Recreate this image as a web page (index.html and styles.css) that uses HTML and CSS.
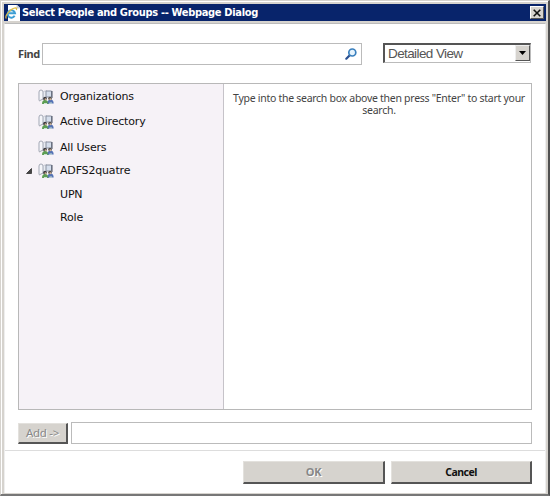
FILE: index.html
```html
<!DOCTYPE html>
<html lang="en">
<head>
<meta charset="utf-8">
<title>Select People and Groups -- Webpage Dialog</title>
<link rel="stylesheet" href="styles.css">
</head>
<body>
<svg width="0" height="0" class="defs" aria-hidden="true">
  <symbol id="directory" viewBox="0 0 16 16">
    <path d="M1 11.500V3q0-2 2-2t2 2v8" fill="#f5f6fa" stroke="#a3a8b5"/>
    <path d="M5.500 2.500l3-1v8l-3 1z" fill="#e8ebf2" stroke="#b8bcc8" stroke-width=".7"/>
    <path d="M8 2h5.500v6H8z" fill="#d5deec" stroke="#8a909f"/>
    <path d="M14 2v7" stroke="#4b5265" stroke-width="1"/>
    <path d="M1 12l4-2 2 2" fill="none" stroke="#a1a5b0"/>
    <path d="M4 15q0-4 3-4t4 4z" fill="#5d9e52"/>
    <path d="M9.500 14.500q0-4 3-4t3.200 4z" fill="#5573b5"/>
    <path d="M6 14.500h3M11.500 14h2.500" stroke="#c8e1d2"/>
    <circle cx="7" cy="9.500" r="1.800" fill="#39393d"/>
    <circle cx="7.500" cy="10.300" r="1" fill="#c8aa8a"/>
    <circle cx="12" cy="9.500" r="1.800" fill="#55504c"/>
    <circle cx="12.300" cy="10.300" r="1" fill="#d1b497"/>
  </symbol>
</svg>
<div class="window">
  <header class="titlebar">
    <svg class="ie" viewBox="0 0 16 16" width="16" height="16">
      <path d="M3 0h9l3 3v13H3z" fill="#fff"/>
      <path d="M12 0v3h3" fill="#d8dce5" stroke="#a9b0bf" stroke-width=".6"/>
      <path d="M9.600 10.800A3.700 3.700 0 1 1 10 8.300H3" fill="none" stroke="#3d9ed4" stroke-width="2"/>
      <path d="M1.400 13.500C-1 11 6 3.200 10.600 2.900c1.300 0 1.300 1 .6 2.100" fill="none" stroke="#e1bd42" stroke-width="1.200"/>
    </svg>
    <h1>Select People and Groups -- Webpage Dialog</h1>
    <button class="close" aria-label="Close"><svg viewBox="0 0 8 8" width="8" height="8"><path d="M.7.7l6.600 6.600M7.300.7L.7 7.300" stroke="#111" stroke-width="1.600"/></svg></button>
  </header>
  <main>
    <div class="search-row">
      <label>Find</label>
      <div class="search"><svg viewBox="0 0 12 12" width="12" height="12"><path d="M5 7L1.300 10.700" stroke="#294f91" stroke-width="2.200" stroke-linecap="round"/><circle cx="7.300" cy="4.500" r="3.500" fill="#e5f3fd" stroke="#397fbd" stroke-width="1.700"/></svg></div>
      <div class="select"><span>Detailed View</span><i><svg viewBox="0 0 7 4" width="7" height="4"><path d="M0 0h7L3.500 4z"/></svg></i></div>
    </div>
    <section class="picker">
      <ul class="tree">
        <li class="org"><b></b><svg><use href="#directory"/></svg><span>Organizations</span></li>
        <li class="active"><b></b><svg><use href="#directory"/></svg><span>Active Directory</span></li>
        <li class="users"><b></b><svg><use href="#directory"/></svg><span>All Users</span></li>
        <li class="adfs"><b><svg class="expander" viewBox="0 0 6 6"><path d="M5.500.5v5h-5z" fill="#444" stroke="#222" stroke-width=".7"/></svg></b><svg><use href="#directory"/></svg><span>ADFS2quatre</span></li>
        <li class="child upn"><span>UPN</span></li>
        <li class="child role"><span>Role</span></li>
      </ul>
      <p class="results">Type into the search box above then press "Enter" to start your<br>search.</p>
    </section>
    <div class="add-row"><button class="btn off">Add -&gt;</button><div class="field"></div></div>
    <footer><button class="btn off">OK</button><button class="btn cancel">Cancel</button></footer>
  </main>
</div>
</body>
</html>
```

FILE: styles.css
```css
* { box-sizing: border-box; }
body { margin: 0; background: #fff; color: #444; font: 11px/13px "Noto Sans", sans-serif; }
.defs { display: block; height: 0; }
.window { width: 550px; height: 496px; padding: 3px 2px 0 3px; background: #d6d3ce; border: solid; border-width: 1px 2px 2px 1px; border-color: #d6d3ce #505050 #777 #d6d3ce; box-shadow: inset 1px 1px #fff; }
.titlebar { display: flex; align-items: center; height: 17px; padding: 0 2px 0 1px; background: #08246b; color: #fff; }
.ie { margin-right: 1px; flex: none; }
h1 { flex: 1; margin: 0; font: bold 11px/17px "DejaVu Sans Condensed", "DejaVu Sans", sans-serif; font-stretch: condensed; letter-spacing: -.32px; white-space: nowrap; }
.close { width: 14px; height: 13px; display: flex; align-items: center; justify-content: center; padding: 0; background: #d6d3ce; border: 1px solid; border-color: #fff #555 #555 #fff; }
main { height: 470px; margin-top: 2px; border-top: 1px solid #bbb; border-left: 1px solid #eee; border-right: 1px solid #eee; background: #fff; }
.search-row { display: flex; padding: 19px 0 0 13px; height: 59px; }
label { width: 24px; font: bold 11px/22px "Noto Sans", sans-serif; letter-spacing: -.4px; }
.search { width: 320px; height: 22px; border: 1px solid #bbb; display: flex; justify-content: flex-end; align-items: center; padding-right: 4px; }
.select { width: 148px; height: 20px; margin-left: 21px; border: solid; border-width: 2px 1px 1px 2px; border-color: #555 #bbb #bbb #555; display: flex; justify-content: space-between; font: 13.500px/18px "Liberation Sans", sans-serif; letter-spacing: -.6px; color: #555; padding-left: 3px; }
.select i { width: 15px; height: 16px; background: #d6d3ce; border: 1px solid; border-color: #eee #555 #555 #eee; display: flex; align-items: center; justify-content: center; }
.picker { display: flex; margin-left: 13px; width: 514px; height: 327px; border: 1px solid #b8b8b8; }
.tree { flex: none; width: 205px; margin: 0; padding: 0 0 0 6px; list-style: none; background: #f6f2f7; border-right: 1px solid #c6c3c9; font: 11px/24px "DejaVu Sans", sans-serif; letter-spacing: -.17px; color: #111; }
.tree li { height: 25px; display: flex; align-items: center; white-space: nowrap; }
.tree b { width: 13px; display: flex; }
.tree li > svg { width: 16px; height: 16px; margin-right: 6px; flex: none; }
.tree .expander { width: 6px; height: 6px; margin-left: 1px; }
.tree .active, .tree .users { height: 26px; }
.tree .adfs { height: 20px; }
.tree .child { padding-left: 35px; height: 27px; }
.tree .role { height: 19px; }
.results { flex: 1; margin: 0; padding: 8px 0 0 3px; text-align: center; font-size: 10.500px; line-height: 12px; letter-spacing: -.28px; white-space: nowrap; }
.add-row { display: flex; margin: 12px 0 0 13px; }
.add-row .btn { width: 50px; height: 21px; margin: 1px 3px 0 0; }
.field { width: 461px; height: 22px; border: 1px solid #bbb; }
.btn { display: flex; align-items: center; justify-content: center; padding: 0; width: 142px; height: 23px; background: #d6d3ce; border: solid; border-width: 1px 2px 2px 1px; border-color: #e3e1dd #555 #555 #e3e1dd; color: #111; font: bold 11px/14px "Noto Sans", sans-serif; white-space: nowrap; }
.btn.off { color: #888; text-shadow: 1px 1px #fff; letter-spacing: -.3px; }
.cancel { width: 141px; font-size: 10.500px; letter-spacing: -.5px; }
.add-row .btn { font-weight: normal; font-size: 11.500px; }
footer { display: flex; gap: 6px; justify-content: flex-end; margin-top: 6px; padding: 10px 13px 0 0; border-top: 1px solid #ddd; }
```
